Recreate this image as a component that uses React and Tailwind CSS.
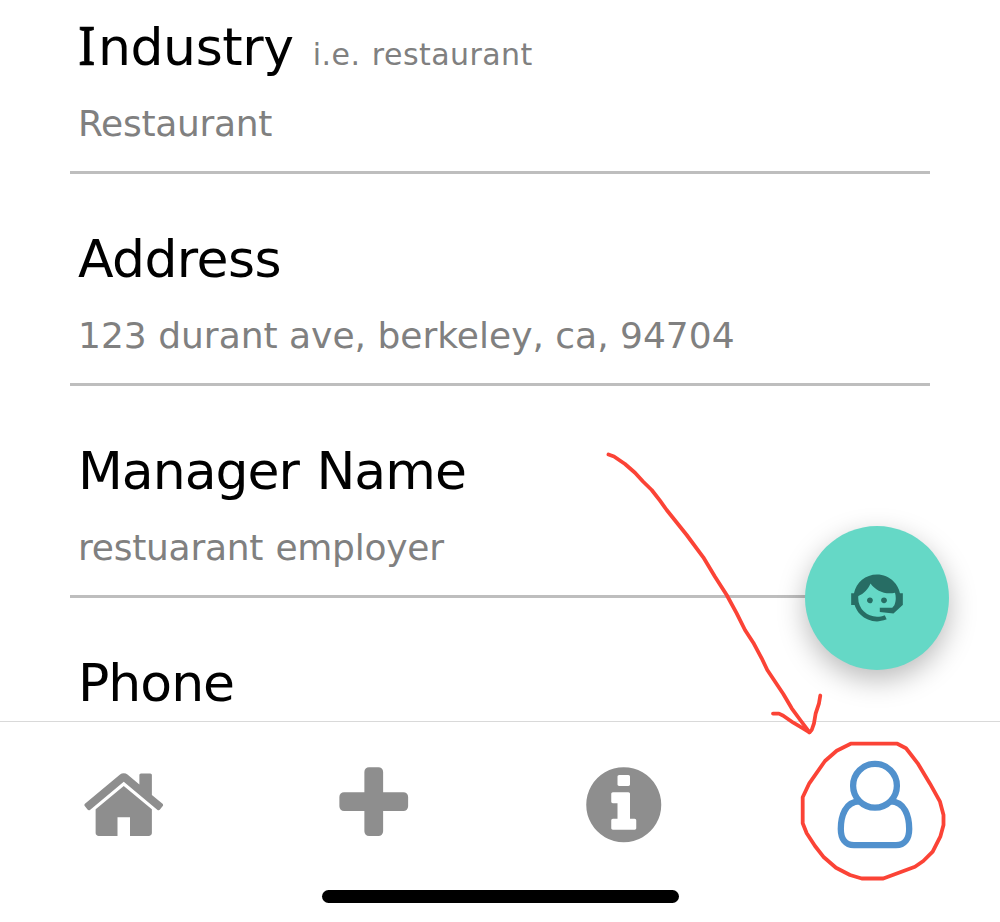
const HOME =
  'M1472 992v480q0 26-19 45t-45 19h-384v-384h-256v384h-384q-26 0-45-19t-19-45v-480q0-1 .5-3t.5-3l575-474 575 474q1 2 1 6zm223-69l-62 74q-8 9-21 11h-3q-13 0-21-7l-692-577-692 577q-12 8-24 7-13-2-21-11l-62-74q-8-10-7-23.5t11-21.5l719-599q32-26 76-26t76 26l244 204v-195q0-14 9-23t23-9h192q14 0 23 9t9 23v408l219 182q10 8 11 21.5t-7 23.5z'
const PLUS =
  'M1600 736v192q0 40-28 68t-68 28h-416v416q0 40-28 68t-68 28h-192q-40 0-68-28t-28-68v-416h-416q-40 0-68-28t-28-68v-192q0-40 28-68t68-28h416v-416q0-40 28-68t68-28h192q40 0 68 28t28 68v416h416q40 0 68 28t28 68z'
const INFO =
  'M1152 1376v-160q0-14-9-23t-23-9h-96v-512q0-14-9-23t-23-9h-320q-14 0-23 9t-9 23v160q0 14 9 23t23 9h96v320h-96q-14 0-23 9t-9 23v160q0 14 9 23t23 9h448q14 0 23-9t9-23zm-128-896v-160q0-14-9-23t-23-9h-192q-14 0-23 9t-9 23v160q0 14 9 23t23 9h192q14 0 23-9t9-23zm640 416q0 209-103 385.5t-279.5 279.5-385.5 103-385.5-103-279.5-279.5-103-385.5 103-385.5 279.5-279.5 385.5-103 385.5 103 279.5 279.5 103 385.5z'
const AGENT =
  'M18.72,14.76C19.07,13.91 19.26,13 19.26,12C19.26,11.28 19.15,10.59 18.96,9.95C18.31,10.1 17.63,10.18 16.92,10.18C13.86,10.18 11.15,8.67 9.5,6.34C8.61,8.5 6.91,10.26 4.77,11.22C4.73,11.47 4.73,11.74 4.73,12A7.27,7.27 0 0,0 12,19.27C13.05,19.27 14.06,19.04 14.97,18.63C15.54,19.72 15.8,20.26 15.78,20.26C14.14,20.81 12.87,21.08 12,21.08C9.58,21.08 7.27,20.13 5.57,18.42C4.53,17.38 3.76,16.11 3.33,14.73H2V10.18H3.09C3.93,6.04 7.6,2.92 12,2.92C14.4,2.92 16.71,3.87 18.42,5.58C19.69,6.84 20.54,8.45 20.89,10.18H22V14.67H22V14.69L22,14.73H21.94L18.38,18L13.08,17.4V15.73H17.91L18.72,14.76M9.27,11.77C9.57,11.77 9.86,11.89 10.07,12.11C10.28,12.32 10.4,12.61 10.4,12.91C10.4,13.21 10.28,13.5 10.07,13.71C9.86,13.92 9.57,14.04 9.27,14.04C8.64,14.04 8.13,13.54 8.13,12.91C8.13,12.28 8.64,11.77 9.27,11.77M14.72,11.77C15.35,11.77 15.85,12.28 15.85,12.91C15.85,13.54 15.35,14.04 14.72,14.04C14.09,14.04 13.58,13.54 13.58,12.91A1.14,1.14 0 0,1 14.72,11.77Z'

function Field({ label, hint, value }) {
  return (
    <section className="flex shrink-0 flex-col">
      <div className="flex h-[60px] items-baseline pl-[8px] leading-[60px]">
        <h2 className="text-[52px] text-black">{label}</h2>
        {hint}
      </div>
      {value && (
        <div className="mb-[55px] h-[97px] border-b-[3px] border-[#bebebe] pt-[24px] pl-[8px] text-[36px] leading-[46px] text-[#808080]">
          {value}
        </div>
      )}
    </section>
  )
}

function NavIcon({ d }) {
  return (
    <button className="flex items-start justify-center pt-[39px] pr-[2px]">
      <svg className="size-[87.5px] fill-[#8e8e8e]" viewBox="0 0 1792 1792">
        <path d={d} />
      </svg>
    </button>
  )
}

export default function App() {
  return (
    <div className="relative flex h-[922px] w-[1000px] flex-col overflow-hidden bg-white font-['DejaVu_Sans',sans-serif]">
      <main className="flex h-[721px] shrink-0 flex-col px-[70px] pt-[17px]">
        <Field
          label={
            <span className="tracking-[-0.4px]">
              <span className="font-['Noto_Sans',sans-serif] leading-none tracking-[2.3px] [-webkit-text-stroke:0.7px_black]">I</span>ndustry
            </span>
          }
          hint={<span className="pl-[19px] text-[30px] tracking-[0.45px] text-[#808080] [word-spacing:1.5px]">i.e. restaurant</span>}
          value={<span className="tracking-[-0.3px]">Restaurant</span>}
        />
        <Field
          label={<span className="tracking-[-0.6px]">Address</span>}
          value={<span>123 durant ave, berkeley, ca, 94704</span>}
        />
        <Field
          label={<span className="tracking-[-1px] [word-spacing:2px]">Manager Name</span>}
          value={<span className="tracking-[-0.25px] [word-spacing:1px]">restuarant employer</span>}
        />
        <Field label={<span className="tracking-[-1px]">Phone</span>} />
      </main>

      <nav className="flex h-[201px] shrink-0 flex-col items-center border-t border-[#d9d9d9] bg-white">
        <div className="grid h-[168px] w-full grid-cols-4">
          <NavIcon d={HOME} />
          <NavIcon d={PLUS} />
          <NavIcon d={INFO} />
          <button className="flex items-start justify-center pt-[34px]">
            <svg className="h-[96px] w-[84px]" viewBox="833 756 84 96" fill="none" stroke="#5191cd" strokeWidth="6.3">
              <circle cx="875" cy="785.7" r="21.9" />
              <path d="M860 801.4C845 801 840.8 817 840.8 829C840.8 839 845.5 845.2 854 845.2H896C904.5 845.2 909.2 839 909.2 829C909.2 817 905 801 890 801.4" />
            </svg>
          </button>
        </div>
        <div className="h-[13px] w-[357px] rounded-full bg-black" />
      </nav>

      <button className="absolute top-[526px] left-[805px] flex size-[144px] items-center justify-center rounded-full bg-[#65d8c6] shadow-[0_10px_28px_rgba(0,0,0,0.27)]">
        <svg className="size-[62px] fill-[#276d64]" viewBox="0 0 24 24">
          <path d={AGENT} />
        </svg>
      </button>

      <svg
        className="pointer-events-none absolute inset-0 h-[922px] w-[1000px]"
        viewBox="0 0 1000 922"
        fill="none"
        stroke="#fb4336"
        strokeWidth="3.8"
        strokeLinejoin="round"
        strokeLinecap="round"
      >
        <path d="M608.5 454.5L614 456.5L625 464L635 472.7L643 481.5L651.7 490L660 500.7L666.7 510L686.7 535L703.3 557.3L715 576.7L726.7 595L736.7 613.3L745 630L753.3 642.7L761.7 658.3L767.3 670L783.3 694L791.7 708.3L801 721L809.5 732.3" />
        <path d="M773 713.6H779L783.3 715.7L793.3 722.7L803 728.3L809.5 732.3L811.7 730L814 723.3L815.7 713.3L819 703.3L820.3 695.5" />
        <path d="M850.7 743.7H897.3L906 748.3L910.5 754L917.7 763.3L930 783.7L940 801.7L943.5 815V825L940.3 836.7L932.7 851.7L923.3 861L915 866.7L883.3 878.5H861.7L850 875L836 867.7L823.3 856.7L815 846L806.7 833.3L802.7 823.3V797.3L809.3 783.3L825 761L836.7 750.7Z" />
      </svg>
    </div>
  )
}
